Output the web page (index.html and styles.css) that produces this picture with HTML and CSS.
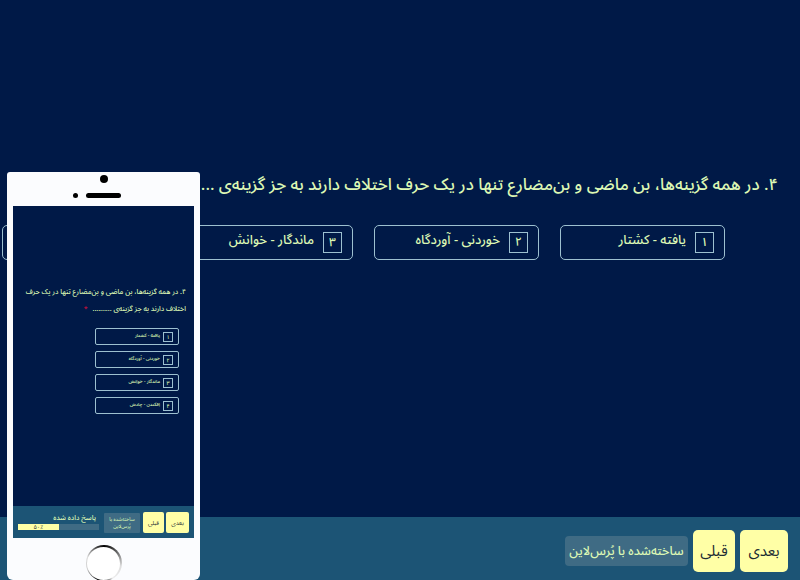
FILE: index.html
```html
<!DOCTYPE html>
<html lang="fa" dir="rtl">
<head>
<meta charset="utf-8">
<title>پرسش‌نامه</title>
<link rel="stylesheet" href="styles.css">
</head>
<body>
<div class="page">
  <main class="main">
    <h1 class="question">۴. در همه گزینه‌ها، بن ماضی و بن‌مضارع تنها در یک حرف اختلاف دارند به جز گزینه‌ی ...</h1>
    <div class="options">
      <div class="option"><span class="num">۱</span><span class="label">یافته - کشتار</span></div>
      <div class="option"><span class="num">۲</span><span class="label">خوردنی - آوردگاه</span></div>
      <div class="option"><span class="num">۳</span><span class="label">ماندگار - خوانش</span></div>
      <div class="option"><span class="num">۴</span><span class="label">افکندن - چادش</span></div>
    </div>
  </main>
  <footer class="footer">
    <button class="btn">بعدی</button>
    <button class="btn">قبلی</button>
    <span class="made">ساخته‌شده با پُرس‌لاین</span>
  </footer>
</div>

<aside class="phone">
  <div class="phone-top">
    <span class="camera"></span>
    <div class="speaker-row"><span class="speaker"></span><span class="dot"></span></div>
  </div>
  <div class="screen">
    <div class="m-main">
      <div class="m-question"><span>۴. در همه گزینه‌ها، بن ماضی و بن‌مضارع تنها در یک حرف اختلاف دارند به جز گزینه‌ی ..........</span><span class="m-star">*</span></div>
      <div class="m-options">
        <div class="m-option"><span class="m-num">۱</span><span class="m-label">یافته - کشتار</span></div>
        <div class="m-option"><span class="m-num">۲</span><span class="m-label">خوردنی - آوردگاه</span></div>
        <div class="m-option"><span class="m-num">۳</span><span class="m-label">ماندگار - خوانش</span></div>
        <div class="m-option"><span class="m-num">۴</span><span class="m-label">افکندن - چادش</span></div>
      </div>
    </div>
    <div class="m-footer">
      <button class="m-btn">بعدی</button>
      <button class="m-btn">قبلی</button>
      <span class="m-made">ساخته‌شده با پُرس‌لاین</span>
      <div class="m-progress">
        <span class="m-answered">پاسخ داده شده</span>
        <div class="m-bar"><div class="m-fill" style="width:50%">۵۰٪</div></div>
      </div>
    </div>
  </div>
  <div class="phone-bottom"><div class="home"><div class="home-in"></div></div></div>
</aside>
</body>
</html>
```

FILE: styles.css
```css
* { box-sizing: border-box; }
html, body { margin: 0; height: 100%; overflow: hidden; }
body { background: #001947; font-family: "Noto Sans Arabic", "Vazirmatn", "DejaVu Sans", sans-serif; color: #dcf7b4; }
button { font-family: inherit; border: 0; padding: 0; cursor: pointer; }

.page { height: 580px; display: flex; flex-direction: column; overflow: hidden; }
.main { flex: 1; padding: 173px 22px 0 0; min-width: 0; }
.question { margin: 0; font-size: 16.7px; line-height: 24px; font-weight: 500; white-space: nowrap; }
.options { display: flex; gap: 21px; margin-top: 28px; margin-right: 53px; }
.option { flex: 0 0 165px; height: 35px; border: 1px solid #9dc0d0; border-radius: 5px; display: flex; align-items: center; gap: 9px; padding: 0 10px 0 9px; font-size: 13px; font-weight: 500; }
.num { flex: 0 0 19px; height: 21px; border: 1px solid #9dc0d0; display: flex; align-items: center; justify-content: center; font-size: 12px; }
.label { position: relative; top: -3px; white-space: nowrap; }

.footer { flex: 0 0 63px; background: #1c5475; display: flex; align-items: center; gap: 5px; padding: 4px 12px 0 0; }
.btn { width: 48px; height: 42px; background: #ffffa6; color: #1c2b33; border-radius: 5px; font-size: 15px; }
.btn + .btn { width: 42px; }
.made { height: 30px; width: 123px; background: #3f6b84; color: #dcf7b4; border-radius: 4px; display: flex; align-items: center; justify-content: center; font-size: 12.5px; font-weight: 500; white-space: nowrap; }

.phone { position: absolute; left: 7px; top: 172px; width: 193px; height: 408px; background: #fbfcfe; border-radius: 3px 3px 6px 6px; display: flex; flex-direction: column; overflow: hidden; }
.phone-top { flex: 0 0 34px; display: flex; flex-direction: column; align-items: center; }
.camera { width: 8px; height: 8px; margin-top: 3px; background: #000; border-radius: 50%; }
.speaker-row { display: flex; align-items: center; gap: 8px; margin-top: 10px; margin-right: 14px; }
.speaker { width: 35px; height: 5px; background: #000; border-radius: 3px; }
.dot { width: 5px; height: 5px; background: #000; border-radius: 50%; }

.screen { flex: 0 0 332px; margin: 0 6px; background: #001947; display: flex; flex-direction: column; }
.m-main { flex: 1; padding: 77px 8px 0 9px; }
.m-question { font-size: 7px; line-height: 17px; font-weight: 500; }
.m-star { color: #c8103c; font-size: 7px; margin-right: 5px; }
.m-options { display: flex; flex-direction: column; gap: 6px; margin-top: 11px; margin-right: 7px; }
.m-option { width: 84px; height: 17px; border: 1px solid #9dc0d0; border-radius: 2px; display: flex; align-items: center; gap: 3px; padding: 0 5px; font-size: 4.8px; font-weight: 500; white-space: nowrap; }
.m-num { flex: 0 0 10px; height: 10px; border: 1px solid #9dc0d0; display: flex; align-items: center; justify-content: center; font-size: 5.5px; }
.m-label { position: relative; top: -1px; }

.m-footer { flex: 0 0 32px; background: #1c5475; display: flex; align-items: center; gap: 2px; padding: 1px 5px 0 5px; }
.m-btn { flex: 0 0 23px; height: 21px; background: #ffffa6; color: #1c2b33; border-radius: 2px; font-size: 6px; }
.m-btn + .m-btn { flex-basis: 21px; }
.m-made { flex: 0 0 36px; height: 20px; margin-right: 1px; background: #3f6b84; color: #dcf7b4; border-radius: 1px; font-size: 5px; line-height: 7px; text-align: center; display: flex; align-items: center; justify-content: center; }
.m-progress { flex: 1; margin: 0 3px 2px 0; display: flex; flex-direction: column; gap: 2px; }
.m-answered { font-size: 7px; font-weight: 500; line-height: 9px; white-space: nowrap; padding-right: 3px; }
.m-bar { height: 6px; background: #3f6b84; direction: ltr; }
.m-fill { height: 100%; background: #ffffa6; color: #1c2b33; font-size: 6px; line-height: 6px; text-align: center; }

.phone-bottom { flex: 1; display: flex; justify-content: center; padding-top: 7px; }
.home { width: 36px; height: 36px; border-radius: 50%; padding: 1.5px; background: conic-gradient(#000 0deg, #666 50deg, #ddd 100deg, #eee 150deg, #222 180deg, #000 200deg, #ccc 250deg, #ddd 290deg, #555 330deg, #000 360deg); }
.home-in { width: 100%; height: 100%; border-radius: 50%; background: #fff; }
```
